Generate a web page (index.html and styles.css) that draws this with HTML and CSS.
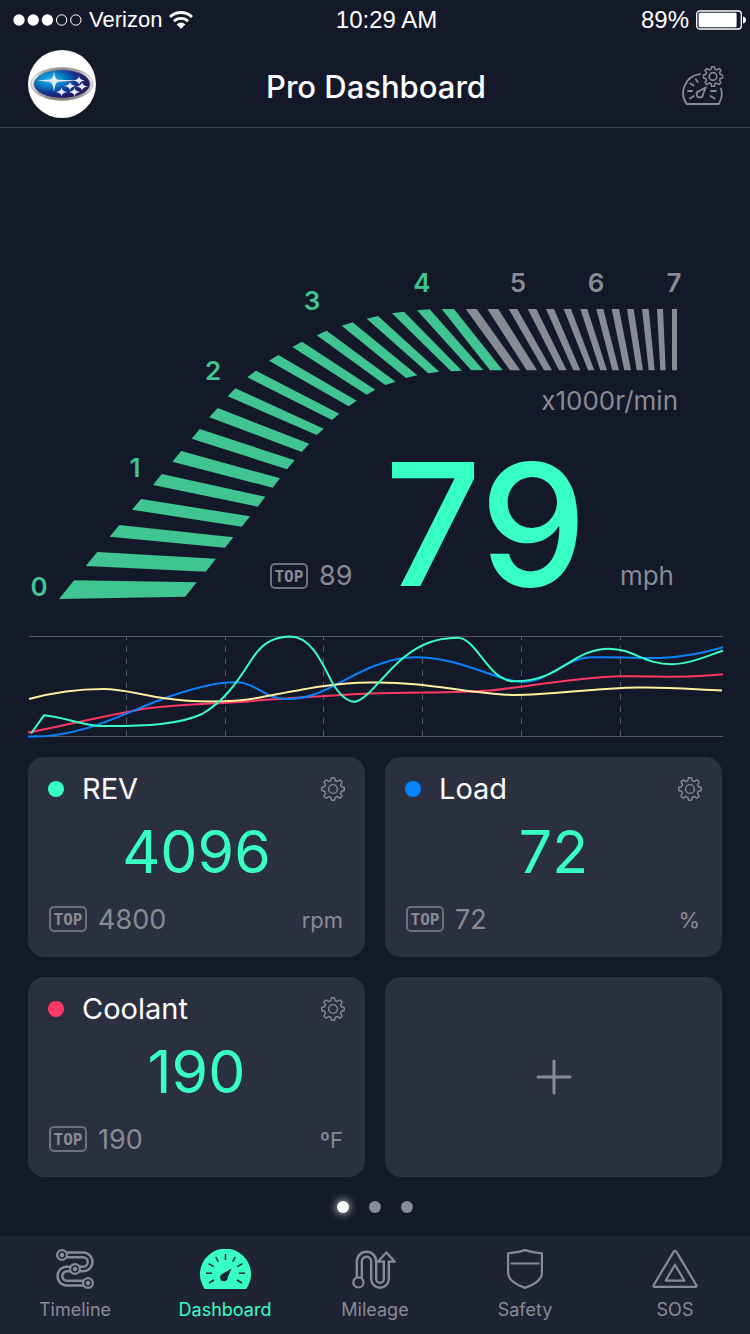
FILE: index.html
```html
<!DOCTYPE html>
<html lang="en">
<head>
<meta charset="utf-8">
<meta name="viewport" content="width=device-width, initial-scale=1">
<title>Pro Dashboard</title>
<link rel="stylesheet" href="styles.css">
</head>
<body>
<svg class="defs" width="0" height="0" aria-hidden="true">
  <symbol id="gear" viewBox="-12 -12 24 24">
    <path d="M-2.2-8.4L-1.7-10.6Q-1.6-11.3-.9-11.3H.9Q1.6-11.3 1.7-10.6L2.2-8.4L4.4-7.5L6.4-8.8Q7-9.2 7.5-8.7L8.7-7.5Q9.2-7 8.8-6.4L7.5-4.4L8.4-2.2L10.6-1.7Q11.3-1.6 11.3-.9V.9Q11.3 1.6 10.6 1.7L8.4 2.2L7.5 4.4L8.8 6.4Q9.2 7 8.7 7.5L7.5 8.7Q7 9.2 6.4 8.8L4.4 7.5L2.2 8.4L1.7 10.6Q1.6 11.3.9 11.3H-.9Q-1.6 11.3-1.7 10.6L-2.2 8.4L-4.4 7.5L-6.4 8.8Q-7 9.2-7.5 8.7L-8.7 7.5Q-9.2 7-8.8 6.4L-7.5 4.4L-8.4 2.2L-10.6 1.7Q-11.3 1.6-11.3.9V-.9Q-11.3-1.6-10.6-1.7L-8.4-2.2L-7.5-4.4L-8.8-6.4Q-9.2-7-8.7-7.5L-7.5-8.7Q-7-9.2-6.4-8.8L-4.4-7.5Z"/>
    <circle r="4.4"/>
  </symbol>
</svg>

<div class="status">
  <div class="status-left">
    <svg width="69" height="12" viewBox="0 0 69 12" fill="#fff" aria-hidden="true">
      <circle cx="6" cy="6" r="5.7"/><circle cx="20.2" cy="6" r="5.7"/><circle cx="34.4" cy="6" r="5.7"/>
      <g fill="none" stroke="#fff"><circle cx="48.6" cy="6" r="5.2"/><circle cx="62.8" cy="6" r="5.2"/></g>
    </svg>
    <span class="carrier">Verizon</span>
    <svg width="24" height="18" viewBox="0 0 24 18" fill="none" stroke="#fff" stroke-width="2.9" aria-hidden="true">
      <path d="M1 6A15.8 15.8 0 0 1 23 6M5 10.2A10 10 0 0 1 19 10.2"/>
      <path d="M7.6 13.4Q12 9.4 16.4 13.4L12 17.8Z" fill="#fff" stroke="none"/>
    </svg>
  </div>
  <div class="status-time">10:29 AM</div>
  <div class="status-right">
    <span>89%</span>
    <svg width="50" height="20" viewBox="0 0 50 20" aria-hidden="true">
      <rect x=".7" y="1" width="44.6" height="18" rx="3" fill="none" stroke="#fff" stroke-width="1.3"/>
      <rect x="2.6" y="2.8" width="38" height="14.4" rx="1" fill="#fff"/>
      <path d="M47 6.6Q50 7.4 50 10T47 13.4Z" fill="#fff"/>
    </svg>
  </div>
</div>

<header class="header">
  <button class="avatar" aria-label="Vehicle">
    <svg width="64" height="36" viewBox="0 0 64 36" aria-hidden="true">
      <defs>
        <linearGradient id="chrome" x1="0" y1="0" x2="0" y2="1"><stop offset="0" stop-color="#888"/><stop offset=".3" stop-color="#eee"/><stop offset=".7" stop-color="#ccc"/><stop offset="1" stop-color="#777"/></linearGradient>
        <radialGradient id="blue" cx=".3" cy=".35" r=".65"><stop offset="0" stop-color="#25bdf0"/><stop offset=".4" stop-color="#087ac4"/><stop offset=".7" stop-color="#173391"/><stop offset="1" stop-color="#201b62"/></radialGradient>
        <path id="star" d="M0-4.4Q.3-.6 6 0Q.3.6 0 4.4Q-.3.6-6 0Q-.3-.6 0-4.4Z"/>
      </defs>
      <ellipse cx="32" cy="18" rx="31" ry="16.4" fill="url(#chrome)" stroke="#999" stroke-width=".6"/>
      <ellipse cx="32" cy="18" rx="28" ry="14.2" fill="url(#blue)" stroke="#777" stroke-width=".7"/>
      <g fill="#e8ecf2">
        <path d="M24 5Q24.8 13 28 13.7L49 14.6L28 15.8Q25 17 24 26Q23 17 20 15.7L7 14.6L20 13.6Q23.2 13 24 5Z"/>
        <use href="#star" x="49" y="14.4"/><use href="#star" x="40" y="20"/><use href="#star" x="52" y="20.4"/><use href="#star" x="31.5" y="26"/><use href="#star" x="44.5" y="26"/>
      </g>
    </svg>
  </button>
  <h1>Pro Dashboard</h1>
  <button class="icon-button" aria-label="Dashboard settings">
    <svg width="42" height="40" viewBox="0 0 42 40" fill="none" stroke="#888b94" stroke-width="1.8" stroke-linecap="round" stroke-linejoin="round" aria-hidden="true">
      <path d="M18 8.2A19 19 0 0 0 4.6 38H36.8A19 19 0 0 0 39 22.6"/>
      <path d="M8.5 17.5L11.5 19.5M13.8 13.2L15.8 16M6 25H10M8 32.5L11.8 30M29 25H34M28.5 30L32.5 32.5"/>
      <path d="M24 21.2L17.4 25A3.2 3.2 0 1 0 21 28Z"/>
      <use href="#gear" x="20.5" y="0" width="21" height="21"/>
    </svg>
  </button>
</header>

<main>
  <section class="gauge" aria-label="Speed and engine revolutions">
    <svg class="dial" viewBox="28 260 694 350" role="img" aria-label="Tachometer">
      <g fill="#3fc492">
        <path d="M74 580.3L196.7 582.3L185.3 596.7L59 599Z"/>
        <path d="M97.3 552L216 558.7L205.7 571.7L85.7 566Z"/>
        <path d="M119.3 525L233.3 537.3L225 547.7L109.7 536.7Z"/>
        <path d="M141 499L250 516.3L241.7 526.7L132 509.7Z"/>
        <path d="M161.7 474L265.3 496.7L257.7 506.7L153 485Z"/>
        <path d="M181.3 451L280 478.3L272.7 487.7L172.3 461.7Z"/>
        <path d="M199.7 429L294.7 460.3L287 469.3L191.7 438.7Z"/>
        <path d="M217.7 408L309.3 443.7L301.7 452L209.3 417.3Z"/>
        <path d="M235.3 388.3L323.7 428.7L316.7 435L227.7 396.3Z"/>
        <path d="M256 370.7L339.3 413.7L332 420L247.3 377.3Z"/>
        <path d="M278.3 355L356.7 400.7L348.7 406.3L269 360.7Z"/>
        <path d="M302 341.7L375.3 389.7L366.7 394.7L292.3 347Z"/>
        <path d="M326.7 330.7L395.7 381.7L385.3 385L316.7 335.3Z"/>
        <path d="M352.7 322.3L417.3 375.3L406 378L341.7 325.7Z"/>
        <path d="M378 316L439.3 371.7L428.3 373.3L366.7 318.7Z"/>
        <path d="M404 311.7L462 370.7L451 371.3L392 313.3Z"/>
        <path d="M429.7 309.3L483.3 370L471.3 370.3L417 310.3Z"/>
        <path d="M454 309L502.7 370.3H490L441.7 309Z"/>
      </g>
      <g fill="#888b94">
        <path d="M465.7 309H476.7L520.3 370.3H510Z"/>
        <path d="M487.3 309H498.3L537 370.3H526.7Z"/>
        <path d="M508.7 309H517.3L552 370.3H544Z"/>
        <path d="M527.7 309H536.3L566.7 370.3H559Z"/>
        <path d="M546 309H554L580.3 370.3H573.3Z"/>
        <path d="M563.7 309H571L594.3 370.3H588Z"/>
        <path d="M580.3 309H587.3L607 370.3H600.3Z"/>
        <path d="M596.3 309H603.3L619 370.3H612.3Z"/>
        <path d="M611.7 309H619L631 370.3H624.3Z"/>
        <path d="M627 309H633.7L643 370.3H636.7Z"/>
        <path d="M642 309H648.7L654.7 370.3H648.7Z"/>
        <path d="M657 309H663L665.7 370.3H660.3Z"/>
        <path d="M672 309H677V370.3H672Z"/>
      </g>
      <g class="scale">
        <text x="39" y="596">0</text><text x="135" y="477">1</text><text x="213" y="380">2</text><text x="312" y="310">3</text><text x="422" y="292">4</text>
        <text class="idle" x="518" y="292">5</text><text class="idle" x="596" y="292">6</text><text class="idle" x="674" y="292">7</text>
      </g>
      <text class="scale-unit" x="678" y="410">x1000r/min</text>
    </svg>
    <div class="readout">
      <div class="top"><span class="badge">TOP</span><span>89</span></div>
      <strong class="speed">79</strong>
      <span class="speed-unit">mph</span>
    </div>
  </section>

  <svg class="chart" viewBox="28 634 694 106" role="img" aria-label="Sensor history">
    <g stroke="#555964" fill="none">
      <path d="M29 636.5H723M29 736.5H723"/>
      <path d="M126.5 636V737M225.5 636V737M323.5 636V737M422.5 636V737M521.5 636V737M620.5 636V737" stroke-dasharray="6 6" stroke-dashoffset="2"/>
    </g>
    <g fill="none" stroke-width="2">
      <path stroke="#ff3864" d="M28 732.5C55 728 115 713 150 708C185 704 210 704 240 702C285 698 320 696 370 693.5C420 692 455 693 490 690.5C525 687 580 677 620 676.3C660 675.5 680 679 723 674.3"/>
      <path stroke="#0783ff" d="M28 736.5C80 738 120 715 160 700C195 687 220 681 240 682.5C257 684 266 699 286 699C325 699 345 675 380 664C405 655 425 656 450 661.5C475 667 500 680 521 682C550 682 565 658 591 657.3C615 657 640 658 660 658C687 657 705 652 723 647.3"/>
      <path stroke="#fff0a0" d="M29 699C55 692 80 689 103 689C125 689 140 695 167 698.5C190 702 230 703 260 697.5C300 690 330 683 370 682.5C425 681 470 694 515 695C555 695 590 688 640 687.5C675 687 700 690 722 690.5"/>
      <path stroke="#38ffc3" d="M31 733.5L44 715.3C62 717 80 724 98 726C148 726.5 181 724 202 714C223 702 236 684 250 662C261 644 272 637 290 636.5C312 636.5 323 665 333 684C340 695 347 702 355 701.7C367 700 381 677 403 658C420 644 436 638 457 637.7C477 637 488 682 515 681.3C562 681 571 649 609 648.7C634 649 643 664 672 664.3C690 664 706 656 723 650.7"/>
    </g>
  </svg>

  <section class="cards" aria-label="Sensors">
    <article class="card">
      <div class="card-head"><i class="dot green"></i><h2>REV</h2><button class="icon-button" aria-label="REV settings"><svg class="gear"><use href="#gear"/></svg></button></div>
      <div class="value">4096</div>
      <div class="card-foot"><div class="top"><span class="badge">TOP</span><span>4800</span></div><span class="unit">rpm</span></div>
    </article>
    <article class="card">
      <div class="card-head"><i class="dot blue"></i><h2>Load</h2><button class="icon-button" aria-label="Load settings"><svg class="gear"><use href="#gear"/></svg></button></div>
      <div class="value">72</div>
      <div class="card-foot"><div class="top"><span class="badge">TOP</span><span>72</span></div><span class="unit">%</span></div>
    </article>
    <article class="card">
      <div class="card-head"><i class="dot red"></i><h2>Coolant</h2><button class="icon-button" aria-label="Coolant settings"><svg class="gear"><use href="#gear"/></svg></button></div>
      <div class="value">190</div>
      <div class="card-foot"><div class="top"><span class="badge">TOP</span><span>190</span></div><span class="unit">ºF</span></div>
    </article>
    <button class="card add" aria-label="Add sensor">
      <svg width="36" height="36" viewBox="0 0 36 36" stroke="#888b94" stroke-width="3" stroke-linecap="round"><path d="M18 2V34M2 18H34"/></svg>
    </button>
  </section>

  <div class="pager"><button class="current" aria-label="Page 1"></button><button aria-label="Page 2"></button><button aria-label="Page 3"></button></div>
</main>

<nav class="tabs">
  <a href="#timeline">
    <svg width="38" height="40" viewBox="0 0 38 40" fill="none" aria-hidden="true">
      <path d="M6 5.8H27A7.1 7.1 0 0 1 27 20H11A7.1 7.1 0 0 0 11 34.2H32" stroke="#888b94" stroke-width="7.2"/>
      <path d="M6 5.8H27A7.1 7.1 0 0 1 27 20H11A7.1 7.1 0 0 0 11 34.2H32" stroke="#1f2434" stroke-width="2.2"/>
      <g fill="#1f2434" stroke="#888b94" stroke-width="2.2"><circle cx="6" cy="6" r="4.9"/><circle cx="19" cy="20" r="4.9"/><circle cx="32" cy="34" r="4.9"/></g>
      <g fill="#888b94"><circle cx="6" cy="6" r="2.3"/><circle cx="19" cy="20" r="2.3"/><circle cx="32" cy="34" r="2.3"/></g>
    </svg>
    <span>Timeline</span>
  </a>
  <a class="active" href="#dashboard" aria-current="page">
    <svg width="51" height="40" viewBox="0 0 51 40" aria-hidden="true">
      <path d="M4.8 40A25.5 25.5 0 1 1 46.2 40Z" fill="#38ffc3"/>
      <path d="M25.5 5V11M15.7 8L18.3 12.7M35.3 8L32.7 12.7M8.7 14.7L13.7 17.6M42.3 14.7L37.3 17.6M6 24.3H12M39 24.3H45M9 34L14 31M42 34L37 31" stroke="#1f2434" stroke-width="1.5"/>
      <path d="M31.5 19.6L22.3 25A3.8 3.8 0 1 0 27.7 28.3Z" fill="#1f2434"/>
    </svg>
    <span>Dashboard</span>
  </a>
  <a href="#mileage">
    <svg width="46" height="40" viewBox="0 0 46 40" fill="none" aria-hidden="true">
      <path d="M7.3 29V12.5A7.2 7.2 0 0 1 21.7 12.5V30A6.3 6.3 0 0 0 34.3 30V11" stroke="#888b94" stroke-width="7.4"/>
      <path d="M26 12.6L34.3 3.4L42.8 12.6Z" fill="#1f2434" stroke="#888b94" stroke-width="2.2" stroke-linejoin="round"/>
      <path d="M7.3 29V12.5A7.2 7.2 0 0 1 21.7 12.5V30A6.3 6.3 0 0 0 34.3 30V11" stroke="#1f2434" stroke-width="2.6"/>
      <circle cx="6.4" cy="33.4" r="5.1" fill="#1f2434" stroke="#888b94" stroke-width="2.2"/>
    </svg>
    <span>Mileage</span>
  </a>
  <a href="#safety">
    <svg width="36" height="40" viewBox="0 0 36 40" fill="none" stroke="#888b94" stroke-width="2.2" stroke-linecap="round" stroke-linejoin="round" aria-hidden="true">
      <path d="M18 1.1C13 2.8 7 3.9 1.1 4.4V24C1.1 31 10 36.5 18 38.9C26 36.5 34.9 31 34.9 24V4.4C29 3.9 23 2.8 18 1.1Z"/><path d="M4.5 14.5H31.5"/>
    </svg>
    <span>Safety</span>
  </a>
  <a href="#sos">
    <svg width="46" height="40" viewBox="0 0 46 40" fill="none" stroke="#888b94" stroke-width="2.2" stroke-linejoin="round" aria-hidden="true">
      <path d="M21.7 2.6Q23 .9 24.3 2.6L44.4 36.2Q44.9 37.9 43.4 37.9H2.6Q1.1 37.9 1.6 36.2Z"/><path d="M23 15.7L32.4 31.7H13.6Z"/>
    </svg>
    <span>SOS</span>
  </a>
</nav>
</body>
</html>
```
FILE: styles.css
```css
* { box-sizing: border-box; margin: 0; }
body {
  display: flex;
  flex-direction: column;
  min-height: 100vh;
  background: #131929;
  color: #fff;
  font-family: Inter, Roboto, sans-serif;
}
.defs { position: absolute; }
button { border: 0; padding: 0; background: none; color: inherit; font: inherit; cursor: pointer; }
svg { display: block; flex: none; }

.status {
  display: grid;
  grid-template-columns: 1fr auto 1fr;
  align-items: center;
  height: 40px;
  padding: 0 4px 0 13px;
  font-family: "Liberation Sans", Arial, sans-serif;
  font-size: 24px;
}
.status-left, .status-right { display: flex; align-items: center; gap: 7px; }
.status-right { justify-content: flex-end; }
.status-time { padding-left: 14px; }
.carrier { font-size: 22px; }

.header {
  display: grid;
  grid-template-columns: 1fr auto 1fr;
  align-items: center;
  height: 88px;
  padding: 0 26px 0 28px;
  border-bottom: 1px solid #3c4153;
}
.header h1 { padding-top: 6px; font-size: 31px; font-weight: 500; line-height: 40px; }
.header > .icon-button { justify-self: end; padding-top: 4px; }
.avatar {
  display: grid;
  place-items: center;
  width: 68px;
  height: 68px;
  border-radius: 50%;
  background: #fff;
}

main { flex: 1; padding: 0 28px; }
.gauge { display: grid; margin-top: 132px; }
.gauge > * { grid-area: 1 / 1; }
.dial { width: 100%; height: auto; }
.scale { fill: #3fc492; font-size: 26px; font-weight: 600; text-anchor: middle; }
.scale .idle { fill: #888b94; }
.scale-unit { fill: #888b94; font-size: 26px; text-anchor: end; }
.readout {
  display: flex;
  align-self: end;
  justify-self: end;
  align-items: flex-end;
  padding-right: 48px;
  color: #888b94;
  font-size: 27px;
  line-height: 46px;
}
.readout .top, .speed-unit { padding-bottom: 11px; }
.speed {
  margin: 0 33px 0 32px;
  padding-bottom: 2px;
  color: #38ffc3;
  font-size: 170px;
  font-weight: 500;
  line-height: 168px;
}
.top { display: flex; align-items: center; gap: 11px; color: #888b94; }
.badge {
  width: 38px;
  height: 26px;
  border: 2px solid #6d717c;
  border-radius: 5px;
  font: bold 16px/23px "DejaVu Sans Mono", monospace;
  text-align: center;
}
.speed-unit { font-size: 26px; }

.chart { width: 100%; height: auto; margin: 24px 0 17px; overflow: visible; }

.cards { display: grid; grid-template-columns: 1fr 1fr; grid-auto-rows: 200px; gap: 20px; }
.card {
  display: flex;
  flex-direction: column;
  justify-content: space-between;
  padding: 12px 20px 22px;
  border-radius: 16px;
  background: #2b3040;
}
.card-head { display: flex; align-items: center; gap: 18px; height: 40px; }
.card-head h2 { flex: 1; font-size: 29px; font-weight: 400; line-height: 40px; }
.dot { width: 16px; height: 16px; border-radius: 50%; }
.green { background: #38ffc3; }
.blue { background: #0783ff; }
.red { background: #ff3864; }
.gear { width: 24px; height: 24px; fill: none; stroke: #888b94; stroke-width: 1.4; stroke-linejoin: round; }
.value {
  margin-bottom: 8px;
  color: #38ffc3;
  font-size: 59px;
  line-height: 64px;
  text-align: center;
}
.card-foot {
  display: flex;
  align-items: center;
  justify-content: space-between;
  height: 32px;
  padding: 0 2px 0 1px;
  color: #888b94;
  font-size: 27px;
}
.unit { padding-top: 2px; font-size: 22px; }
.add { align-items: center; justify-content: center; padding: 0; }

.pager { display: flex; justify-content: center; gap: 20px; margin: 24px 0 23px; }
.pager button { width: 12px; height: 12px; border-radius: 50%; background: #888b94; }
.pager .current { background: #fff; box-shadow: 0 0 8px 1px rgba(255, 255, 255, .7); }

.tabs { display: grid; grid-template-columns: repeat(5, 1fr); height: 98px; background: #1f2434; }
.tabs a {
  display: flex;
  flex-direction: column;
  align-items: center;
  gap: 9px;
  padding-top: 13px;
  color: #888b94;
  font-size: 18px;
  line-height: 24px;
  text-decoration: none;
}
.tabs .active { color: #38ffc3; }
```
